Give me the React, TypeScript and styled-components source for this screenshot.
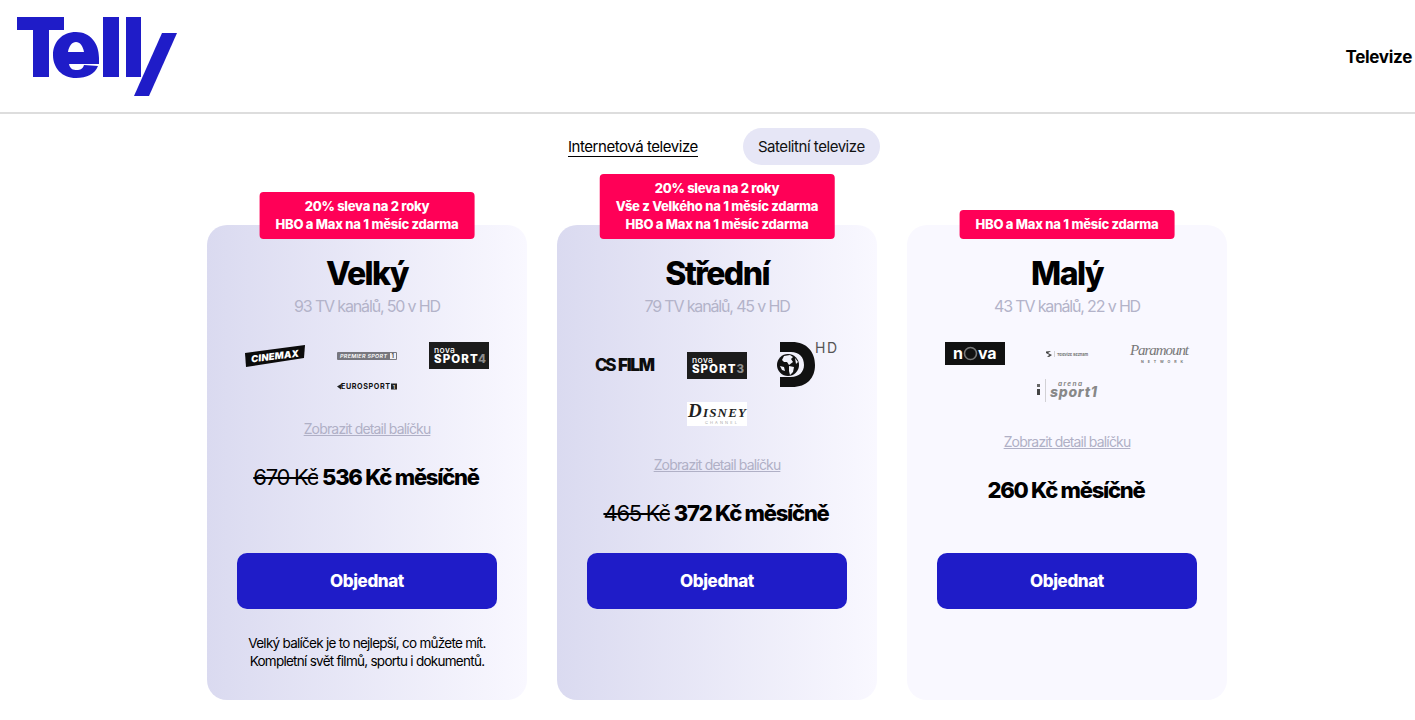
import React from "react";
import styled, { createGlobalStyle } from "styled-components";

const GlobalStyle = createGlobalStyle`
  html, body {
    margin: 0;
    padding: 0;
    background: #fff;
    color: #000;
    font-family: Inter, "Liberation Sans", sans-serif;
  }
`;

const Header = styled.header`
  height: 112px;
  border-bottom: 2px solid #dddddd;
  display: flex;
  align-items: center;
  justify-content: space-between;
  padding: 0 3px 0 17px;
`;

const BrandLogo = styled.svg`
  width: 160px;
  height: 80px;
  display: block;
  margin-top: 1px;
`;

const NavLink = styled.a`
  font-size: 17px;
  font-weight: 700;
  letter-spacing: -0.3px;
  color: #000;
  margin-top: 2px;
`;

const Tabs = styled.nav`
  display: flex;
  align-items: center;
  height: 37px;
  margin-top: 14px;
  padding-left: 568px;
`;

const ActiveTab = styled.a`
  font-size: 15px;
  letter-spacing: -0.45px;
  line-height: 19px;
  color: #000;
  border-bottom: 1.5px solid #000;
  margin-right: 45px;
`;

const PillTab = styled.a`
  height: 37px;
  width: 137px;
  border-radius: 19px;
  background: #e6e6f6;
  font-size: 15px;
  letter-spacing: -0.45px;
  color: #111;
  display: flex;
  align-items: center;
  justify-content: center;
`;

const Cards = styled.main`
  display: flex;
  gap: 30px;
  margin-top: 60px;
  padding-left: 207px;
`;

const Card = styled.section<{ $gradient: boolean }>`
  position: relative;
  width: 320px;
  height: 475px;
  box-sizing: border-box;
  padding: 30px 30px 0;
  border-radius: 20px;
  background: ${(p) =>
    p.$gradient
      ? "linear-gradient(90deg, #dadaf0 0%, #f9f8ff 100%)"
      : "#f9f8ff"};
  display: flex;
  flex-direction: column;
  align-items: center;
`;

const Badge = styled.div`
  position: absolute;
  left: 50%;
  bottom: calc(100% - 14px);
  transform: translateX(-50%);
  white-space: nowrap;
  padding: 5px 16px 6px;
  border-radius: 4px;
  background: #ff0057;
  color: #fff;
  font-size: 13px;
  font-weight: 800;
  letter-spacing: -0.25px;
  line-height: 18px;
  text-align: center;
`;

const Title = styled.h2`
  margin: 0;
  font-size: 32px;
  font-weight: 800;
  letter-spacing: -1.6px;
  line-height: 38px;
`;

const Subtitle = styled.p`
  margin: 2px 0 0;
  font-size: 16px;
  letter-spacing: -1.15px;
  line-height: 22px;
  color: #b3b3c9;
`;

const LogoGrid = styled.div`
  width: 260px;
  margin-top: 25px;
  display: flex;
  flex-wrap: wrap;
  justify-content: center;
  align-items: center;
  gap: 14px 32px;
`;

const ChannelLogo = styled.svg<{ $height: number }>`
  width: 60px;
  height: ${(p) => p.$height}px;
  display: block;
  overflow: visible;
  font-family: Inter, "Liberation Sans", sans-serif;
`;

const DetailLink = styled.a`
  margin-top: 30px;
  font-size: 14px;
  letter-spacing: -0.83px;
  line-height: 18px;
  color: #b0b0c6;
  text-decoration: underline;
`;

const Price = styled.p`
  margin: 25px 0 0 -2px;
  font-size: 22px;
  font-weight: 800;
  letter-spacing: -1.25px;
  line-height: 28px;
`;

const OldPrice = styled.span`
  font-weight: 400;
  text-decoration: line-through;
  margin-right: 4px;
`;

const Footer = styled.div`
  position: absolute;
  left: 30px;
  right: 30px;
  top: 328px;
`;

const OrderButton = styled.button`
  width: 260px;
  height: 56px;
  border: 0;
  border-radius: 10px;
  background: #1f1cc8;
  color: #fff;
  font-family: inherit;
  font-size: 17px;
  font-weight: 800;
  letter-spacing: -0.4px;
`;

const Note = styled.p`
  margin: 25px 0 0;
  font-size: 13.5px;
  letter-spacing: -0.73px;
  line-height: 18px;
  text-align: center;
  color: #000;
`;

const Cinemax = () => (
  <ChannelLogo $height={22} viewBox="0 0 60 22">
    <path d="M0 8 L60 0 L59 13 L1 22 Z" fill="#0b0b0b" />
    <text x="30" y="14.5" fontSize="9.5" fontWeight="900" fontStyle="italic" fill="#fff" textAnchor="middle" textLength="48" transform="rotate(-7 30 11)">CINEMAX</text>
  </ChannelLogo>
);

const PremierSport = () => (
  <ChannelLogo $height={8} viewBox="0 0 60 8">
    <rect width="60" height="8" rx="1" fill="#77777e" />
    <rect x="53" y="1" width="6" height="6" fill="#f0f0f5" />
    <text x="3" y="6" fontSize="5.4" fontStyle="italic" fontWeight="600" fill="#fff" textLength="47">PREMIER SPORT</text>
    <text x="54.5" y="6.4" fontSize="5.5" fontWeight="700" fill="#444">1</text>
  </ChannelLogo>
);

const NovaSport = ({ n }: { n: string }) => (
  <ChannelLogo $height={27} viewBox="0 0 60 27">
    <rect width="60" height="27" fill="#1c1c1c" />
    <text x="5" y="10.5" fontSize="8.5" fontWeight="500" fill="#fff" letterSpacing="0.4">nova</text>
    <text x="5" y="21" fontSize="11.5" fontWeight="800" fill="#fff" textLength="52">SPORT<tspan fill="#8d8d8d">{n}</tspan></text>
  </ChannelLogo>
);

const Eurosport = () => (
  <ChannelLogo $height={7} viewBox="0 0 60 7">
    <path d="M0 3.5 L5 0.5 L4 6.5 Z" fill="#222" />
    <text x="4" y="6.3" fontSize="7.2" fontWeight="700" fill="#111" textLength="49">EUROSPORT</text>
    <rect x="54" y="0.5" width="6" height="6" fill="#222" />
    <text x="55.7" y="5.8" fontSize="5.4" fontWeight="700" fill="#ddd">1</text>
  </ChannelLogo>
);

const CsFilm = () => (
  <ChannelLogo $height={14} viewBox="0 0 60 14">
    <text x="0" y="12.8" fontSize="17" fontWeight="800" fill="#0d0d0d" letterSpacing="-2.4">CS</text>
    <text x="23" y="12.8" fontSize="17" fontWeight="900" fill="#0d0d0d" textLength="37">FILM</text>
  </ChannelLogo>
);

const Discovery = () => (
  <ChannelLogo $height={46} viewBox="0 0 60 46">
    <path d="M1 0 H13 C28 0 36 10 36 23 C36 36 28 45 13 45 H1 V35 H12 C20 35 25 30 25 23 C25 15 20 10 12 10 H1 Z" fill="#111" />
    <circle cx="9" cy="23" r="11" fill="#111" />
    <path d="M5 14 L11 13 L14 15 L12 17 L14 20 L10 23 L8 20 L5 20 L3 18 Z M10 24 L15 25 L14 30 L11 33 L10 29 Z M16 16 L19 20 L17 22 Z M1 24 L5 25 L6 29 L3 28 Z" fill="#f2f2fb" />
    <text x="36" y="11" fontSize="14" fill="#555" textLength="22">HD</text>
  </ChannelLogo>
);

const Disney = () => (
  <ChannelLogo $height={24} viewBox="0 0 60 24">
    <rect width="60" height="24" fill="#fff" />
    <text x="1" y="15" fontSize="13" fontFamily="Liberation Serif" fontStyle="italic" fontWeight="700" fill="#222" textLength="58"><tspan fontSize="19">D</tspan>ISNEY</text>
    <text x="18" y="22" fontSize="4" fill="#aaa" textLength="32">CHANNEL</text>
  </ChannelLogo>
);

const Nova = () => (
  <ChannelLogo $height={23} viewBox="0 0 60 23">
    <rect width="60" height="23" fill="#111" />
    <text x="8" y="16.5" fontSize="16" fontWeight="700" fill="#fff">n</text>
    <circle cx="25.5" cy="11.5" r="6" fill="none" stroke="#777" strokeWidth="1.6" />
    <text x="33" y="16.5" fontSize="16" fontWeight="700" fill="#fff" letterSpacing="-0.2">va</text>
  </ChannelLogo>
);

const Seznam = () => (
  <ChannelLogo $height={8} viewBox="0 0 60 8">
    <path d="M9 1.5 L14 1 L11 3 L15 5 L12 7 L10 6.5 L12.5 5 L9 3 Z" fill="#444" />
    <rect x="17" y="1" width="0.4" height="6" fill="#999" />
    <text x="20" y="5.5" fontSize="4" fontWeight="600" fill="#666" textLength="31">Televize Seznam</text>
  </ChannelLogo>
);

const Paramount = () => (
  <ChannelLogo $height={23} viewBox="0 0 60 23">
    <text x="1" y="12.5" fontSize="15" fontFamily="Liberation Serif" fontStyle="italic" fill="#777" textLength="59">Paramount</text>
    <text x="12" y="20.5" fontSize="3.6" fontWeight="700" fill="#777" textLength="42">NETWORK</text>
  </ChannelLogo>
);

const ArenaSport = () => (
  <ChannelLogo $height={24} viewBox="0 0 60 24">
    <rect x="0" y="5" width="3" height="3" fill="#666" />
    <rect x="0" y="10" width="3" height="6" fill="#444" />
    <rect x="8" y="0" width="0.5" height="23" fill="#aaa" />
    <text x="21" y="7" fontSize="6.5" fontWeight="700" fontStyle="italic" fill="#888" textLength="24">arena</text>
    <text x="13" y="18" fontSize="14" fontWeight="800" fontStyle="italic" fill="#888" textLength="47">sport1</text>
  </ChannelLogo>
);

const packages = [
  {
    name: "Velký",
    channels: "93 TV kanálů, 50 v HD",
    badge: ["20% sleva na 2 roky", "HBO a Max na 1 měsíc zdarma"],
    logos: [<Cinemax key="a" />, <PremierSport key="b" />, <NovaSport key="c" n="4" />, <Eurosport key="d" />],
    oldPrice: "670 Kč",
    price: "536 Kč měsíčně",
    gradient: true,
    note: ["Velký balíček je to nejlepší, co můžete mít.", "Kompletní svět filmů, sportu i dokumentů."],
  },
  {
    name: "Střední",
    channels: "79 TV kanálů, 45 v HD",
    badge: ["20% sleva na 2 roky", "Vše z Velkého na 1 měsíc zdarma", "HBO a Max na 1 měsíc zdarma"],
    logos: [<CsFilm key="a" />, <NovaSport key="b" n="3" />, <Discovery key="c" />, <Disney key="d" />],
    oldPrice: "465 Kč",
    price: "372 Kč měsíčně",
    gradient: true,
  },
  {
    name: "Malý",
    channels: "43 TV kanálů, 22 v HD",
    badge: ["HBO a Max na 1 měsíc zdarma"],
    logos: [<Nova key="a" />, <Seznam key="b" />, <Paramount key="c" />, <ArenaSport key="d" />],
    price: "260 Kč měsíčně",
    gradient: false,
  },
];

export default function App() {
  return (
    <>
      <GlobalStyle />
      <Header>
        <BrandLogo viewBox="17 17 160 80">
          <g fill="#1f1cc8">
            <path d="M17 17 H64 V30 H49 V77 H33 V30 H17 Z" />
            <path fillRule="evenodd" d="M76 32 C90 32 99 43 99 58 V64 H69 C70 69 73 70 77 70 C80 70 83 69 84 65 L98 66 C95 74 87 78 76 78 C62 78 53 68 53 55 C53 42 62 32 76 32 Z M68 52 H84 C83 46 80 42 76 42 C72 42 69 46 68 52 Z" />
            <rect x="103" y="17" width="16" height="60" />
            <rect x="126" y="17" width="15" height="60" />
            <path d="M162 33 H177 L149 96 H134 Z" />
          </g>
        </BrandLogo>
        <NavLink>Televize</NavLink>
      </Header>
      <Tabs>
        <ActiveTab>Internetová televize</ActiveTab>
        <PillTab>Satelitní televize</PillTab>
      </Tabs>
      <Cards>
        {packages.map((p) => (
          <Card key={p.name} $gradient={p.gradient}>
            <Badge>
              {p.badge.map((line) => (
                <div key={line}>{line}</div>
              ))}
            </Badge>
            <Title>{p.name}</Title>
            <Subtitle>{p.channels}</Subtitle>
            <LogoGrid>{p.logos}</LogoGrid>
            <DetailLink>Zobrazit detail balíčku</DetailLink>
            <Price>
              {p.oldPrice && <OldPrice>{p.oldPrice}</OldPrice>}
              {p.price}
            </Price>
            <Footer>
              <OrderButton>Objednat</OrderButton>
              {p.note && (
                <Note>
                  {p.note[0]}
                  <br />
                  {p.note[1]}
                </Note>
              )}
            </Footer>
          </Card>
        ))}
      </Cards>
    </>
  );
}
